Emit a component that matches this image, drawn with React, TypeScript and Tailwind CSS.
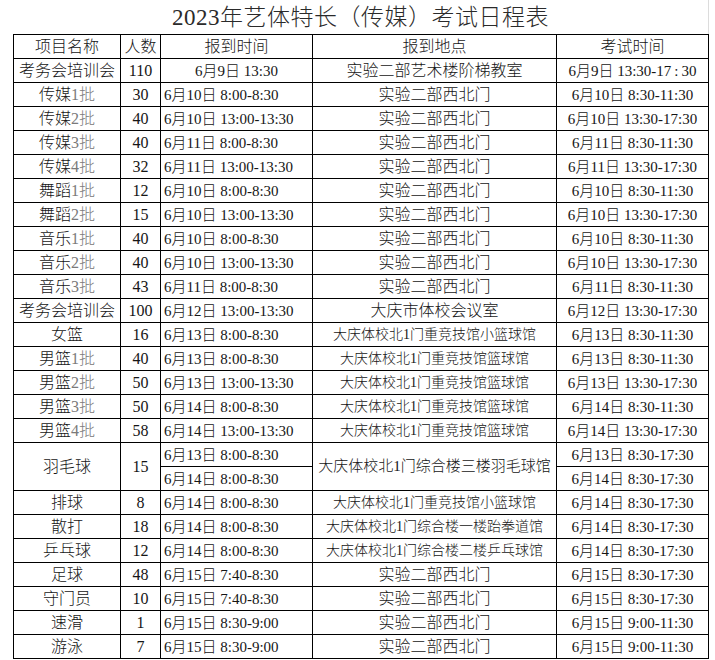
type Row = {
  name: string;
  tag?: string;
  count: string;
  arrive: string;
  place: string;
  exam: string;
  placeSize?: string;
};

const west = "实验二部西北门";
const bigBall = "大庆体校北1门重竞技馆篮球馆";
const smallBall = "大庆体校北1门重竞技馆小篮球馆";

const rows: Row[] = [
  { name: "传媒", tag: "1批", count: "30", arrive: "6月10日 8:00-8:30", place: west, exam: "6月10日 8:30-11:30" },
  { name: "传媒", tag: "2批", count: "40", arrive: "6月10日 13:00-13:30", place: west, exam: "6月10日 13:30-17:30" },
  { name: "传媒", tag: "3批", count: "40", arrive: "6月11日 8:00-8:30", place: west, exam: "6月11日 8:30-11:30" },
  { name: "传媒", tag: "4批", count: "32", arrive: "6月11日 13:00-13:30", place: west, exam: "6月11日 13:30-17:30" },
  { name: "舞蹈", tag: "1批", count: "12", arrive: "6月10日 8:00-8:30", place: west, exam: "6月10日 8:30-11:30" },
  { name: "舞蹈", tag: "2批", count: "15", arrive: "6月10日 13:00-13:30", place: west, exam: "6月10日 13:30-17:30" },
  { name: "音乐", tag: "1批", count: "40", arrive: "6月10日 8:00-8:30", place: west, exam: "6月10日 8:30-11:30" },
  { name: "音乐", tag: "2批", count: "40", arrive: "6月10日 13:00-13:30", place: west, exam: "6月10日 13:30-17:30" },
  { name: "音乐", tag: "3批", count: "43", arrive: "6月11日 8:00-8:30", place: west, exam: "6月11日 8:30-11:30" },
  { name: "考务会培训会", count: "100", arrive: "6月12日 13:00-13:30", place: "大庆市体校会议室", exam: "6月12日 13:30-17:30" },
  { name: "女篮", count: "16", arrive: "6月13日 8:00-8:30", place: smallBall, exam: "6月13日 8:30-11:30", placeSize: "text-[14px]" },
  { name: "男篮", tag: "1批", count: "40", arrive: "6月13日 8:00-8:30", place: bigBall, exam: "6月13日 8:30-11:30", placeSize: "text-[14px]" },
  { name: "男篮", tag: "2批", count: "50", arrive: "6月13日 13:00-13:30", place: bigBall, exam: "6月13日 13:30-17:30", placeSize: "text-[14px]" },
  { name: "男篮", tag: "3批", count: "50", arrive: "6月14日 8:00-8:30", place: bigBall, exam: "6月14日 8:30-11:30", placeSize: "text-[14px]" },
  { name: "男篮", tag: "4批", count: "58", arrive: "6月14日 13:00-13:30", place: bigBall, exam: "6月14日 13:30-17:30", placeSize: "text-[14px]" },
];

const tail: Row[] = [
  { name: "排球", count: "8", arrive: "6月14日 8:00-8:30", place: smallBall, exam: "6月14日 8:30-17:30", placeSize: "text-[14px]" },
  { name: "散打", count: "18", arrive: "6月14日 8:00-8:30", place: "大庆体校北1门综合楼一楼跆拳道馆", exam: "6月14日 8:30-17:30", placeSize: "text-[14px]" },
  { name: "乒乓球", count: "12", arrive: "6月14日 8:00-8:30", place: "大庆体校北1门综合楼二楼乒乓球馆", exam: "6月14日 8:30-17:30", placeSize: "text-[14px]" },
  { name: "足球", count: "48", arrive: "6月15日 7:40-8:30", place: west, exam: "6月15日 8:30-17:30" },
  { name: "守门员", count: "10", arrive: "6月15日 7:40-8:30", place: west, exam: "6月15日 8:30-17:30" },
  { name: "速滑", count: "1", arrive: "6月15日 8:30-9:00", place: west, exam: "6月15日 9:00-11:30" },
  { name: "游泳", count: "7", arrive: "6月15日 8:30-9:00", place: west, exam: "6月15日 9:00-11:30" },
];

const cell = "border border-black p-0 h-[24px] whitespace-nowrap overflow-hidden leading-[22px]";

function DataRow({ r }: { r: Row }) {
  return (
    <tr>
      <td className={`${cell} text-center text-[16px]`}>
        {r.name}
        {r.tag && <span className="text-[#7a7a7a]">{r.tag}</span>}
      </td>
      <td className={`${cell} text-center text-[16px]`}>{r.count}</td>
      <td className={`${cell} text-left pl-[3px] text-[15px]`}>{r.arrive}</td>
      <td className={`${cell} text-center ${r.placeSize ?? "text-[16px]"}`}>{r.place}</td>
      <td className={`${cell} text-center text-[15px]`}>{r.exam}</td>
    </tr>
  );
}

export default function App() {
  return (
    <div
      className="w-[715px] h-[660px] bg-white text-[#151515] font-light overflow-hidden"
      style={{ fontFamily: '"Liberation Serif", "Noto Sans CJK SC", serif' }}
    >
      <div className="ml-[13px] w-[696px] h-[34px] border-r border-[#dcdcdc] flex items-center justify-center">
        <h1 className="text-[23px] leading-none text-[#2a2a2a] font-light tracking-[0.5px]">
          2023年艺体特长（传媒）考试日程表
        </h1>
      </div>
      <table className="ml-[13px] w-[696px] table-fixed border-collapse">
        <colgroup>
          <col className="w-[107px]" />
          <col className="w-[40px]" />
          <col className="w-[152px]" />
          <col className="w-[244px]" />
          <col className="w-[152px]" />
        </colgroup>
        <tbody>
          <tr>
            <td className={`${cell} text-center text-[16px]`}>项目名称</td>
            <td className={`${cell} text-center text-[16px]`}>人数</td>
            <td className={`${cell} text-center text-[16px]`}>报到时间</td>
            <td className={`${cell} text-center text-[16px]`}>报到地点</td>
            <td className={`${cell} text-center text-[16px]`}>考试时间</td>
          </tr>
          <tr>
            <td className={`${cell} text-center text-[16px]`}>考务会培训会</td>
            <td className={`${cell} text-center text-[16px]`}>110</td>
            <td className={`${cell} text-center text-[15px]`}>6月9日 13:30</td>
            <td className={`${cell} text-center text-[16px]`}>实验二部艺术楼阶梯教室</td>
            <td className={`${cell} text-center text-[15px]`}>6月9日 13:30-17&thinsp;:&thinsp;30</td>
          </tr>
          {rows.map((r, i) => (
            <DataRow key={i} r={r} />
          ))}
          <tr>
            <td rowSpan={2} className="border border-black p-0 text-center text-[16px]">羽毛球</td>
            <td rowSpan={2} className="border border-black p-0 text-center text-[16px]">15</td>
            <td className={`${cell} text-left pl-[3px] text-[15px]`}>6月13日 8:00-8:30</td>
            <td rowSpan={2} className="border border-black p-0 text-center text-[15px] whitespace-nowrap">
              大庆体校北1门综合楼三楼羽毛球馆
            </td>
            <td className={`${cell} text-center text-[15px]`}>6月13日 8:30-17:30</td>
          </tr>
          <tr>
            <td className={`${cell} text-left pl-[3px] text-[15px]`}>6月14日 8:00-8:30</td>
            <td className={`${cell} text-center text-[15px]`}>6月14日 8:30-17:30</td>
          </tr>
          {tail.map((r, i) => (
            <DataRow key={i} r={r} />
          ))}
        </tbody>
      </table>
    </div>
  );
}
